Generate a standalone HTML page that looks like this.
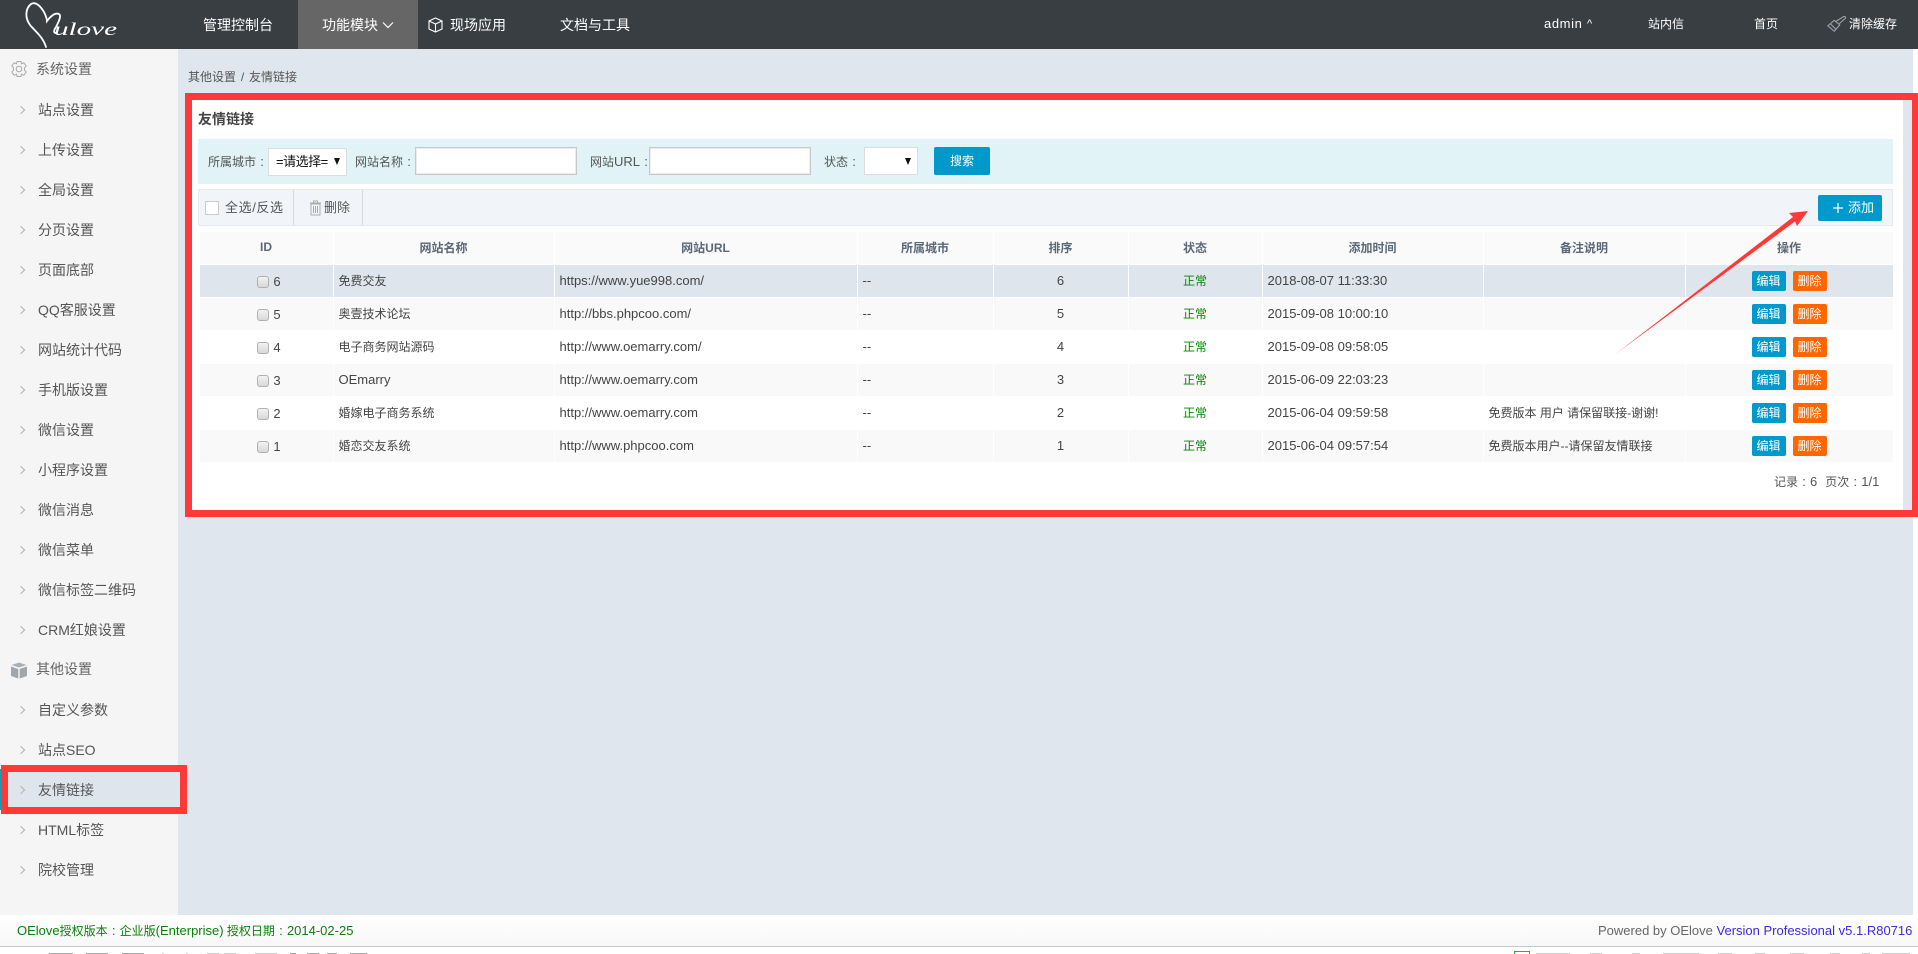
<!DOCTYPE html>
<html lang="zh">
<head>
<meta charset="utf-8">
<title>友情链接</title>
<style>
html,body{margin:0;padding:0;width:1918px;height:954px;overflow:hidden;background:#fff}
body{position:relative;font-family:"Liberation Sans","Noto Sans CJK SC",sans-serif;font-size:12px;color:#444}
.a{position:absolute;white-space:nowrap}
.k{display:inline-block;width:12px;text-align:center;font-family:"Liberation Sans",sans-serif;font-size:13px}
#hd{left:0;top:0;width:1918px;height:49px;background:#393e42}
.nav{color:#fff;font-size:14px;line-height:20px;top:15px}
.nr{color:#fff;font-size:12px;line-height:18px;top:15px}
#side{left:0;top:49px;width:178px;height:866px;background:#f5f5f5}
#main{left:178px;top:49px;width:1735px;height:866px;background:#dfe6ed}
.it{left:38px;font-size:14px;line-height:20px;color:#555}
.gr{left:36px;font-size:14px;line-height:20px;color:#666}
.ch{left:18px;width:5px;height:5px;border-top:1px solid #b4b4b4;border-right:1px solid #b4b4b4;transform:rotate(45deg)}
.lbl{top:152px;line-height:20px;font-size:12px;color:#555}
.sel{background:#fff;border:1px solid #ddd;box-sizing:border-box}
.inp{background:#fff;border:1px solid #c8c8c8;box-shadow:inset 0 0 0 1px #ececec;box-sizing:border-box;top:147px;height:28px}
.tri{width:0;height:0;border-left:3.5px solid transparent;border-right:3.5px solid transparent;border-top:7px solid #111}
table{position:absolute;left:198.500px;top:231px;width:1694px;table-layout:fixed;border-collapse:collapse;font-size:12px}
th,td{border:1px solid #fff;height:32px;padding:0 5px 2px;box-sizing:border-box;white-space:nowrap;overflow:hidden}
tr{height:33px}
th{background:#fafafa;color:#5b6878;font-weight:bold;text-align:center}
td{color:#444}
td.op{padding-bottom:0}
tr.o td{background:#f9f9f9}
tr.w td{background:#fff}
tr.c td{background:#dee5ed}
.l{font-size:13px}
.cb{display:inline-block;width:12px;height:12px;box-sizing:border-box;border:1px solid #b0b0b0;border-radius:3px;background:linear-gradient(#f2f2f2,#d8d8d8);vertical-align:-2px;margin-right:4px}
td.id{padding-left:11px;padding-bottom:0}
.g{color:#080;text-align:center}
.n{text-align:center}
.btn{display:inline-block;width:34px;height:20px;line-height:20px;text-align:center;color:#fff;border-radius:2px;font-size:12px;vertical-align:middle}
.b1{background:#0099cc;margin-right:7px}
.b2{background:#ff6600}
.seg{top:953px;height:1px;background:#aaa}
.seg2{top:953px;height:1px;background:#ccc}
</style>
</head>
<body>
<div class="a" id="hd"></div>
<svg class="a" style="left:0;top:0" width="140" height="49" viewBox="0 0 140 49">
<path d="M46 47C43 37 36 32 30 25C25 18 25 9 31 4C36 1 41 7 44 12C46 16 47 20 47 21C50 17 55 12 59 14C62 16 58 23 56 27C54 30 53 33 56 33" fill="none" stroke="#fff" stroke-width="1.8" stroke-linecap="round"/>
<text x="54" y="35" font-family="Liberation Serif,serif" font-style="italic" font-size="18" fill="#fff" textLength="63" lengthAdjust="spacingAndGlyphs">ulove</text>
</svg>
<div class="a" style="left:298px;top:0;width:120px;height:49px;background:#666"></div>
<div class="a nav" style="left:203px">管理控制台</div>
<div class="a nav" style="left:322px">功能模块</div>
<svg class="a" style="left:382px;top:21px" width="12" height="8"><path d="M1 1.500L6 6.500L11 1.500" fill="none" stroke="#fff" stroke-width="1.200"/></svg>
<svg class="a" style="left:428px;top:17px" width="15" height="16" viewBox="0 0 15 16"><path d="M7.500 1L14 4V12L7.500 15L1 12V4ZM1 4L7.500 7L14 4M7.500 7V15" fill="none" stroke="#fff" stroke-width="1.100"/></svg>
<div class="a nav" style="left:450px">现场应用</div>
<div class="a nav" style="left:560px">文档与工具</div>
<div class="a nr" style="left:1544px;font-size:13px;letter-spacing:.6px">admin</div>
<div class="a nr" style="left:1587px;font-size:11px">^</div>
<div class="a nr" style="left:1648px">站内信</div>
<div class="a nr" style="left:1754px">首页</div>
<svg class="a" style="left:1827px;top:15px" width="20" height="18" viewBox="0 0 22 18"><path d="M1 11L8 5L14 10L8 17ZM10 6L18 1C20 0 21 2 20 3L13 9M4 9L10 15" fill="none" stroke="#9aa0a5" stroke-width="1.200"/></svg>
<div class="a nr" style="left:1849px">清除缓存</div>

<div class="a" id="side"></div>
<div class="a" id="main"></div>

<svg class="a" style="left:10px;top:60px" width="18" height="18" viewBox="0 0 18 18"><circle cx="9" cy="9" r="2.800" fill="none" stroke="#aaa"/><path d="M7 1.500H11L11.500 3.800L13.800 2.800L16.200 6L14.500 7.800V10.200L16.200 12L13.800 15.200L11.500 14.200L11 16.500H7L6.500 14.200L4.200 15.200L1.800 12L3.500 10.200V7.800L1.800 6L4.200 2.800L6.500 3.800Z" fill="none" stroke="#aaa"/></svg>
<div class="a gr" style="top:59px">系统设置</div>
<div class="a ch" style="top:107px"></div><div class="a it" style="top:100px">站点设置</div>
<div class="a ch" style="top:147px"></div><div class="a it" style="top:140px">上传设置</div>
<div class="a ch" style="top:187px"></div><div class="a it" style="top:180px">全局设置</div>
<div class="a ch" style="top:227px"></div><div class="a it" style="top:220px">分页设置</div>
<div class="a ch" style="top:267px"></div><div class="a it" style="top:260px">页面底部</div>
<div class="a ch" style="top:307px"></div><div class="a it" style="top:300px">QQ客服设置</div>
<div class="a ch" style="top:347px"></div><div class="a it" style="top:340px">网站统计代码</div>
<div class="a ch" style="top:387px"></div><div class="a it" style="top:380px">手机版设置</div>
<div class="a ch" style="top:427px"></div><div class="a it" style="top:420px">微信设置</div>
<div class="a ch" style="top:467px"></div><div class="a it" style="top:460px">小程序设置</div>
<div class="a ch" style="top:507px"></div><div class="a it" style="top:500px">微信消息</div>
<div class="a ch" style="top:547px"></div><div class="a it" style="top:540px">微信菜单</div>
<div class="a ch" style="top:587px"></div><div class="a it" style="top:580px">微信标签二维码</div>
<div class="a ch" style="top:627px"></div><div class="a it" style="top:620px">CRM红娘设置</div>
<svg class="a" style="left:10px;top:662px" width="18" height="17" viewBox="0 0 18 17"><path d="M9 0.500L16.500 3L9 5.500L1.500 3Z" fill="#a9b0b5"/><path d="M1 4.500L8.300 7V16.500L1 14Z M17 4.500L9.700 7V16.500L17 14Z" fill="#a0a7ac"/></svg>
<div class="a gr" style="top:659px">其他设置</div>
<div class="a ch" style="top:707px"></div><div class="a it" style="top:700px">自定义参数</div>
<div class="a ch" style="top:747px"></div><div class="a it" style="top:740px">站点SEO</div>
<div class="a" style="left:0;top:769px;width:178px;height:41px;background:#dee5ed"></div>
<div class="a" style="left:0;top:769px;width:1px;height:41px;background:#1a9bb5"></div>
<div class="a ch" style="top:787px"></div><div class="a it" style="top:780px">友情链接</div>
<div class="a ch" style="top:827px"></div><div class="a it" style="top:820px">HTML标签</div>
<div class="a ch" style="top:867px"></div><div class="a it" style="top:860px">院校管理</div>

<div class="a" style="left:188px;top:67px;line-height:20px;color:#555;word-spacing:1.500px">其他设置 / 友情链接</div>

<div class="a" style="left:192px;top:100px;width:1711px;height:410px;background:#fff"></div>
<div class="a" style="left:198px;top:109px;line-height:20px;font-size:14px;font-weight:bold;color:#444">友情链接</div>

<div class="a" style="left:198px;top:139px;width:1695px;height:45px;background:#e1f3f7"></div>
<div class="a lbl" style="left:208px">所属城市<span class="k">:</span></div>
<div class="a sel" style="left:268px;top:148px;width:79px;height:28px"></div>
<div class="a" style="left:276px;top:152px;line-height:20px;font-size:13px;letter-spacing:-.5px;color:#111">=请选择=</div>
<div class="a tri" style="left:334px;top:158px"></div>
<div class="a lbl" style="left:355px">网站名称<span class="k">:</span></div>
<div class="a inp" style="left:415px;width:162px"></div>
<div class="a lbl" style="left:590px">网站<span class="l">URL</span><span class="k">:</span></div>
<div class="a inp" style="left:649px;width:162px"></div>
<div class="a lbl" style="left:824px">状态<span class="k">:</span></div>
<div class="a sel" style="left:864px;top:147px;width:54px;height:28px"></div>
<div class="a tri" style="left:905px;top:158px"></div>
<div class="a" style="left:934px;top:147px;width:56px;height:28px;line-height:28px;text-align:center;color:#fff;background:#0099cc;border-radius:2px">搜索</div>

<div class="a" style="left:198px;top:189px;width:1695px;height:37px;box-sizing:border-box;background:#f1f5f9;border:1px solid #e6eaee"></div>
<div class="a" style="left:205px;top:201px;width:14px;height:14px;box-sizing:border-box;background:#fff;border:1px solid #ccc;border-radius:1px"></div>
<div class="a" style="left:225px;top:198px;line-height:20px;font-size:13px;letter-spacing:.6px;color:#555">全选/反选</div>
<div class="a" style="left:293px;top:190px;width:1px;height:35px;background:#d5d9dd"></div>
<svg class="a" style="left:309px;top:200px" width="13" height="16" viewBox="0 0 13 16"><path d="M2 4H11V15H2ZM1 3H12M4.500 3V1H8.500V3M4.500 6V13M6.500 6V13M8.500 6V13" fill="none" stroke="#aaa"/></svg>
<div class="a" style="left:324px;top:198px;line-height:20px;font-size:13px;color:#555">删除</div>
<div class="a" style="left:362px;top:190px;width:1px;height:35px;background:#d5d9dd"></div>
<div class="a" style="left:1818px;top:195px;width:64px;height:26px;background:#0099cc;border-radius:2px"></div>
<svg class="a" style="left:1832px;top:202px" width="12" height="12"><path d="M6 1V11M1 6H11" stroke="#fff" stroke-width="1.200"/></svg>
<div class="a" style="left:1848px;top:198px;line-height:20px;font-size:13px;color:#fff">添加</div>

<table>
<colgroup><col style="width:134px"><col style="width:221px"><col style="width:303px"><col style="width:136px"><col style="width:135px"><col style="width:134px"><col style="width:221px"><col style="width:202px"><col style="width:208px"></colgroup>
<tr><th>ID</th><th>网站名称</th><th>网站URL</th><th>所属城市</th><th>排序</th><th>状态</th><th>添加时间</th><th>备注说明</th><th>操作</th></tr>
<tr class="c"><td class="n id"><span class="cb"></span><span class="l">6</span></td><td>免费交友</td><td class="l">https://www.yue998.com/</td><td class="l">--</td><td class="n l">6</td><td class="g">正常</td><td class="l">2018-08-07 11:33:30</td><td></td><td class="n op"><span class="btn b1">编辑</span><span class="btn b2">删除</span></td></tr>
<tr class="o"><td class="n id"><span class="cb"></span><span class="l">5</span></td><td>奥壹技术论坛</td><td class="l">http://bbs.phpcoo.com/</td><td class="l">--</td><td class="n l">5</td><td class="g">正常</td><td class="l">2015-09-08 10:00:10</td><td></td><td class="n op"><span class="btn b1">编辑</span><span class="btn b2">删除</span></td></tr>
<tr class="w"><td class="n id"><span class="cb"></span><span class="l">4</span></td><td>电子商务网站源码</td><td class="l">http://www.oemarry.com/</td><td class="l">--</td><td class="n l">4</td><td class="g">正常</td><td class="l">2015-09-08 09:58:05</td><td></td><td class="n op"><span class="btn b1">编辑</span><span class="btn b2">删除</span></td></tr>
<tr class="o"><td class="n id"><span class="cb"></span><span class="l">3</span></td><td class="l">OEmarry</td><td class="l">http://www.oemarry.com</td><td class="l">--</td><td class="n l">3</td><td class="g">正常</td><td class="l">2015-06-09 22:03:23</td><td></td><td class="n op"><span class="btn b1">编辑</span><span class="btn b2">删除</span></td></tr>
<tr class="w"><td class="n id"><span class="cb"></span><span class="l">2</span></td><td>婚嫁电子商务系统</td><td class="l">http://www.oemarry.com</td><td class="l">--</td><td class="n l">2</td><td class="g">正常</td><td class="l">2015-06-04 09:59:58</td><td>免费版本 用户 请保留联接-谢谢!</td><td class="n op"><span class="btn b1">编辑</span><span class="btn b2">删除</span></td></tr>
<tr class="o"><td class="n id"><span class="cb"></span><span class="l">1</span></td><td>婚恋交友系统</td><td class="l">http://www.phpcoo.com</td><td class="l">--</td><td class="n l">1</td><td class="g">正常</td><td class="l">2015-06-04 09:57:54</td><td>免费版本用户--请保留友情联接</td><td class="n op"><span class="btn b1">编辑</span><span class="btn b2">删除</span></td></tr>
</table>

<div class="a" style="left:1774px;top:472px;line-height:20px;color:#555">记录<span class="k">:</span><span class="l">6</span><span style="margin-left:8px">页次</span><span class="k">:</span><span class="l">1/1</span></div>

<div class="a" style="left:0;top:915px;width:1918px;height:31px;background:linear-gradient(#fff,#f7f7f7)"></div>
<div class="a" style="left:0;top:946px;width:1918px;height:1px;background:#c8c8c8"></div>
<div class="a" style="left:17px;top:921px;line-height:20px;font-size:12px;color:#0a800a"><span class="l">OElove</span>授权版本<span class="k">:</span>企业版<span class="l">(Enterprise)</span> 授权日期<span class="k">:</span><span class="l">2014-02-25</span></div>
<div class="a" style="left:1598px;top:921px;line-height:20px;font-size:13px;color:#666">Powered by OElove <span style="color:#3a2bdc">Version Professional v5.1.R80716</span></div>

<div class="a seg" style="left:49px;width:24px"></div>
<div class="a seg" style="left:86px;width:22px"></div>
<div class="a seg" style="left:122px;width:22px"></div>
<div class="a seg2" style="left:162px;width:2px"></div>
<div class="a seg2" style="left:186px;width:2px"></div>
<div class="a seg2" style="left:207px;width:12px"></div>
<div class="a seg2" style="left:224px;width:12px"></div>
<div class="a seg2" style="left:255px;width:22px"></div>
<div class="a seg" style="left:290px;width:6px"></div>
<div class="a seg" style="left:307px;width:12px"></div>
<div class="a seg" style="left:327px;width:10px"></div>
<div class="a seg" style="left:350px;width:17px"></div>
<div class="a" style="left:1514px;top:951px;width:16px;height:3px;box-sizing:border-box;border:1px solid #22b14c;border-bottom:0"></div>
<div class="a seg2" style="left:1536px;width:34px"></div>
<div class="a seg2" style="left:1590px;width:12px"></div>
<div class="a seg2" style="left:1632px;width:8px"></div>
<div class="a seg2" style="left:1663px;width:36px"></div>
<div class="a seg2" style="left:1718px;width:14px"></div>
<div class="a seg2" style="left:1755px;width:10px"></div>
<div class="a seg2" style="left:1790px;width:14px"></div>
<div class="a seg2" style="left:1830px;width:10px"></div>
<div class="a seg2" style="left:1862px;width:8px"></div>
<div class="a seg2" style="left:1882px;width:28px"></div>

<div class="a" style="left:185px;top:93px;width:1734px;height:424px;box-sizing:border-box;border:7px solid #ff3838"></div>
<div class="a" style="left:1px;top:765px;width:186px;height:49px;box-sizing:border-box;border:7px solid #ff3838"></div>
<svg class="a" style="left:0;top:0" width="1918" height="954"><polygon points="1615,354.500 1793,217 1789,213 1808,211 1797,226 1795,221.500" fill="#ff3838"/></svg>
</body>
</html>
